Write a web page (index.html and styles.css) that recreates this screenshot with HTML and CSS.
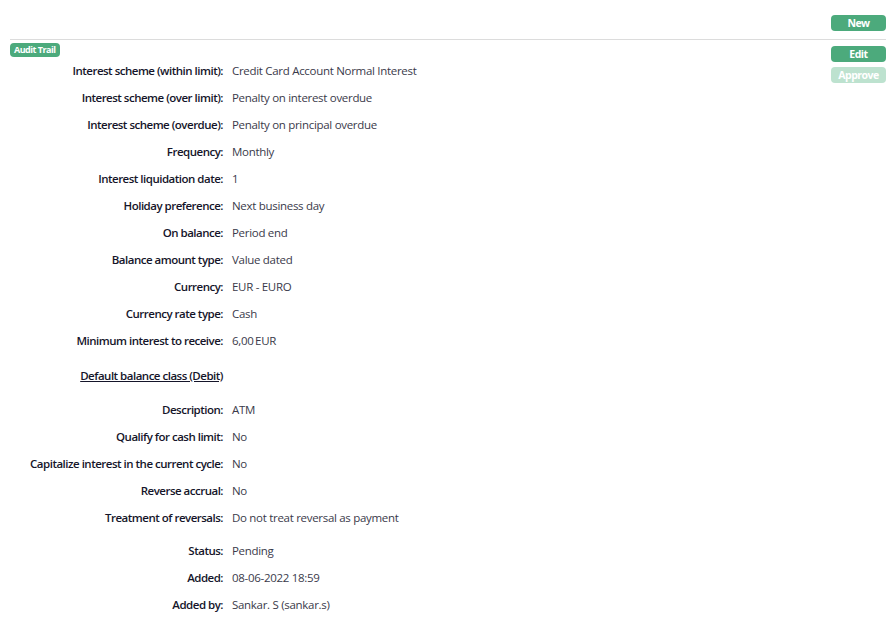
FILE: index.html
```html
<!DOCTYPE html>
<html>
<head>
<meta charset="utf-8">
<link rel="stylesheet" href="styles.css">
</head>
<body>
<div class="page">
  <div class="toolbar">
    <button class="btn">New</button>
  </div>
  <div class="main">
    <div class="details">
      <span class="badge">Audit Trail</span>
      <div class="grid first">
        <div class="label">Interest scheme (within limit):</div><div class="value">Credit Card Account Normal Interest</div>
        <div class="label">Interest scheme (over limit):</div><div class="value">Penalty on interest overdue</div>
        <div class="label">Interest scheme (overdue):</div><div class="value">Penalty on principal overdue</div>
        <div class="label">Frequency:</div><div class="value">Monthly</div>
        <div class="label">Interest liquidation date:</div><div class="value">1</div>
        <div class="label">Holiday preference:</div><div class="value">Next business day</div>
        <div class="label">On balance:</div><div class="value">Period end</div>
        <div class="label">Balance amount type:</div><div class="value">Value dated</div>
        <div class="label">Currency:</div><div class="value">EUR - EURO</div>
        <div class="label">Currency rate type:</div><div class="value">Cash</div>
        <div class="label">Minimum interest to receive:</div><div class="value">6,00&#8201;EUR</div>
      </div>
      <div class="grid section">
        <div class="label heading">Default balance class (Debit)</div><div></div>
      </div>
      <div class="grid after-heading">
        <div class="label">Description:</div><div class="value">ATM</div>
        <div class="label">Qualify for cash limit:</div><div class="value">No</div>
        <div class="label">Capitalize interest in the current cycle:</div><div class="value">No</div>
        <div class="label">Reverse accrual:</div><div class="value">No</div>
        <div class="label">Treatment of reversals:</div><div class="value">Do not treat reversal as payment</div>
      </div>
      <div class="grid audit">
        <div class="label">Status:</div><div class="value">Pending</div>
        <div class="label">Added:</div><div class="value">08-06-2022 18:59</div>
        <div class="label">Added by:</div><div class="value">Sankar. S (sankar.s)</div>
      </div>
    </div>
    <div class="actions">
      <button class="btn">Edit</button>
      <button class="btn disabled">Approve</button>
    </div>
  </div>
</div>
</body>
</html>
```
FILE: styles.css
```css
* { box-sizing: border-box; }
html, body { margin: 0; padding: 0; background: #fff; }
body {
  font-family: "Open Sans", "Noto Sans", sans-serif;
  font-size: 11.5px;
  color: #2b2b3a;
}
.page { padding: 15px 9px 0 10px; }
.toolbar {
  display: flex;
  justify-content: flex-end;
  padding-bottom: 8px;
  border-bottom: 1px solid #dcdcdc;
}
.btn {
  width: 55px;
  height: 16px;
  border: none;
  border-radius: 4px;
  background: #4caa7c;
  color: #fff;
  font-family: "Open Sans", sans-serif;
  font-weight: 700;
  font-size: 10.5px;
  letter-spacing: -0.5px;
  line-height: 16px;
  padding: 0;
  display: block;
}
.btn.disabled { background: #bde2cf; }
.main {
  display: flex;
  justify-content: space-between;
  padding-top: 3px;
}
.badge {
  display: inline-block;
  height: 14px;
  line-height: 14px;
  padding: 0 4px;
  border-radius: 4px;
  background: #4caa7c;
  color: #fff;
  font-weight: 700;
  font-size: 9px;
  letter-spacing: -0.5px;
  vertical-align: top;
}
.details { display: flex; flex-direction: column; align-items: flex-start; }
.grid {
  display: grid;
  grid-template-columns: 213px auto;
  column-gap: 9px;
  grid-auto-rows: 27px;
  align-items: center;
}
.label {
  text-align: right;
  font-weight: 600;
  color: #15152a;
  letter-spacing: -0.5px;
  white-space: nowrap;
}
.value { color: #3a3a4a; white-space: nowrap; letter-spacing: -0.3px; }
.heading { text-decoration: underline; }
.section { margin-top: 8px; }
.after-heading { margin-top: 7px; }
.audit { margin-top: 6px; }
.actions {
  display: flex;
  flex-direction: column;
  gap: 5px;
  padding-top: 3px;
}
```
